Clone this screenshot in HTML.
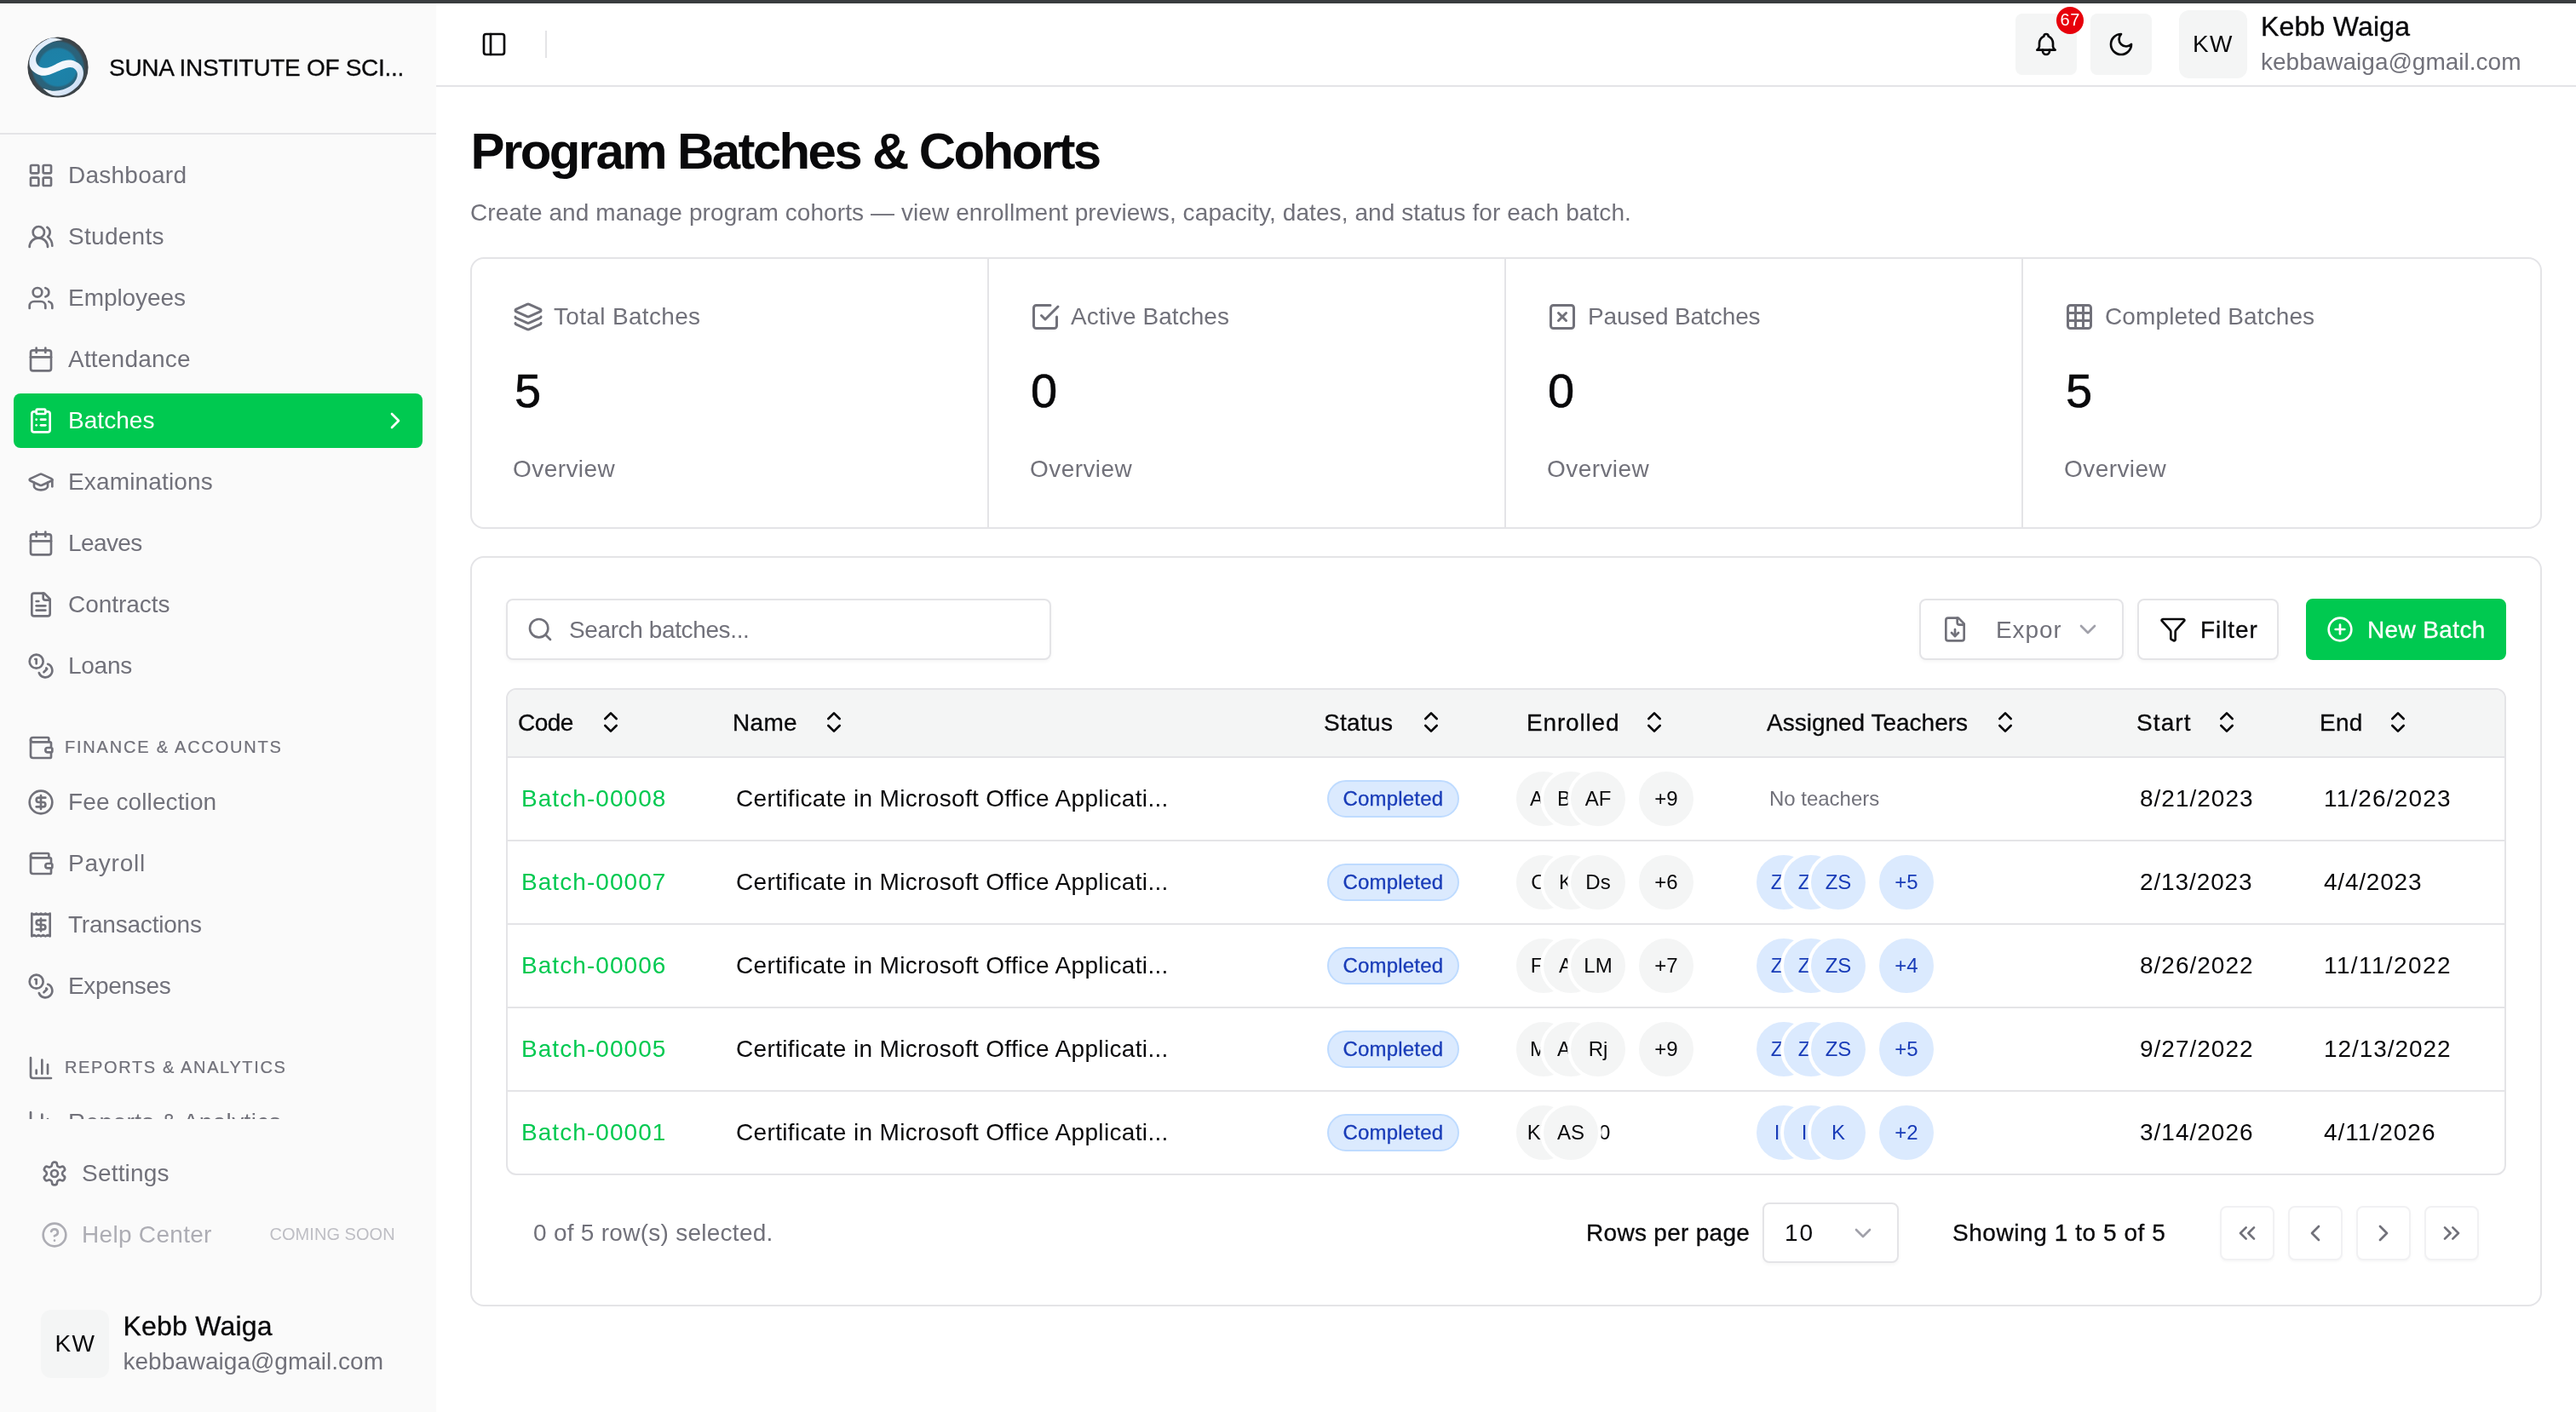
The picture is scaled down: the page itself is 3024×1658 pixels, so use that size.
<!DOCTYPE html>
<html lang="en"><head><meta charset="utf-8"><title>Program Batches &amp; Cohorts</title>
<style>
*{box-sizing:border-box;margin:0;padding:0}
html,body{width:3024px;height:1658px;overflow:hidden;background:#fff}
body{font-family:"Liberation Sans",sans-serif;position:relative;color:#09090b}
.topstrip{position:absolute;left:0;top:0;width:3024px;height:4px;background:#3a3d3f;z-index:10}
.sidebar{position:absolute;left:0;top:0;width:512px;height:1658px;background:#fafafa}
.scroll{position:absolute;left:0;top:158px;width:512px;height:1156px;overflow:hidden}
.scroll>*{margin-top:-158px}
.sidebar,.topbar,.main{will-change:transform}
.ic{position:absolute;display:block;overflow:visible}
.t{position:absolute;white-space:nowrap;font-weight:400}
h1.t{font-weight:700}
.hr{position:absolute;height:2px;background:#e4e4e7}
.vr{position:absolute;width:2px;background:#e4e4e7}
.active{position:absolute;background:#00c950;border-radius:8px;display:block}
.avatar{position:absolute;background:#f4f5f5}
.topbar{position:absolute;left:512px;top:4px;width:2512px;height:98px;border-bottom:2px solid #e4e4e7;background:#fff}
.ibtn{position:absolute;width:72px;height:72px;border-radius:8px;background:#f4f5f5}
.badge{position:absolute;width:32px;height:32px;border-radius:16px;background:#e7000b;color:#fff;font-size:20px;line-height:30px;text-align:center;letter-spacing:.6px;text-indent:.6px}
.main{position:absolute;left:0;top:0;width:3024px;height:1658px}
.card{position:absolute;border:2px solid #e4e4e7;border-radius:16px;background:#fff}
.input,.btn{position:absolute;border:2px solid #e4e4e7;border-radius:8px;background:#fff;box-shadow:0 2px 4px rgba(0,0,0,.04)}
.btn.green{background:#00c950;border-color:#00c950;box-shadow:none}
.table{position:absolute;border:2px solid #e4e4e7;border-radius:12px;overflow:hidden;background:#fff}
.thead{position:absolute;left:0;top:0;width:100%;height:79.5px;background:#f4f5f5;border-bottom:2px solid #e4e4e7}
.pill{position:absolute;height:44px;padding:0 16.5px;border-radius:22px;background:#dbeafe;border:2px solid #bedbff;color:#193cb8;font-size:24px;line-height:40px;font-weight:500;letter-spacing:.18px;-webkit-text-stroke:.3px}
.av{position:absolute;width:72px;height:72px;margin:-4px;border-radius:36px;border:4px solid #fff;font-size:24px;display:flex;align-items:center;justify-content:center}
.av.g{background:#f4f5f5;color:#09090b}
.av.b{background:#dbeafe;color:#193cb8}
.pbtn{position:absolute;width:64px;height:64px;border:2px solid #f1f1f3;border-radius:8px;background:#fff;box-shadow:0 2px 3px rgba(0,0,0,.03)}
</style></head><body>
<div class="topstrip"></div>
<aside class="sidebar">
<svg class="ic" style="left:32px;top:43px;width:72px;height:72px" viewBox="0 0 72 72">
<defs><radialGradient id="lg" cx="50%" cy="50%" r="50%"><stop offset="0" stop-color="#1c83aa"/><stop offset="0.6" stop-color="#1d80a6"/><stop offset="0.67" stop-color="#2a637b"/><stop offset="0.82" stop-color="#2b627a"/><stop offset="0.89" stop-color="#3b474d"/><stop offset="1" stop-color="#3d4145"/></radialGradient>
<linearGradient id="sw" x1="0" y1="0" x2="1" y2="1"><stop offset="0" stop-color="#cfe3fb"/><stop offset="0.45" stop-color="#f7f9fc"/><stop offset="0.6" stop-color="#f1f5fb"/><stop offset="1" stop-color="#bcd5f3"/></linearGradient></defs>
<circle cx="36" cy="36" r="35.6" fill="url(#lg)"/>
<path d="M41.8 3.9 C39.4 3.5 32.5 0.7 27.7 1.7 C22.9 2.7 16.7 6.5 12.8 9.9 C8.9 13.3 6.0 18.1 4.3 21.9 C2.6 25.7 2.1 29.4 2.5 32.5 C2.9 35.6 4.3 38.2 6.4 40.3 C8.5 42.4 12.1 44.5 14.9 45.3 C17.7 46.1 20.3 45.9 23.4 45.3 C26.5 44.7 30.2 42.9 33.3 41.7 C36.4 40.5 39.0 39.1 41.8 38.2 C44.6 37.3 47.9 36.1 50.3 36.1 C52.7 36.1 54.6 37.0 56.0 38.2 C57.4 39.4 58.6 41.2 58.8 43.2 C59.0 45.2 58.6 47.9 57.4 50.2 C56.2 52.6 54.3 55.3 51.7 57.3 C49.1 59.3 45.3 61.2 41.8 62.3 C38.3 63.4 34.4 63.9 30.5 63.7 C26.6 63.5 20.4 61.4 18.4 60.9 C19.9 62.1 24.5 66.5 27.7 67.9 C30.9 69.3 34.2 69.6 37.6 69.4 C41.0 69.2 44.7 68.3 48.2 66.5 C51.7 64.7 56.1 61.4 58.8 58.7 C61.5 56.0 63.3 53.0 64.5 50.2 C65.7 47.4 66.1 44.4 65.9 41.7 C65.7 39.0 64.8 36.0 63.1 33.9 C61.5 31.8 58.5 30.1 56.0 29.0 C53.5 27.9 51.0 27.5 48.2 27.6 C45.4 27.7 42.0 28.6 39.0 29.7 C36.0 30.8 33.3 32.8 30.5 34.0 C27.7 35.2 24.6 36.6 22.0 36.8 C19.4 37.0 16.8 36.5 14.9 35.4 C13.0 34.3 11.4 32.4 10.7 30.4 C10.0 28.4 9.8 25.9 10.7 23.3 C11.6 20.7 14.0 17.3 16.3 14.8 C18.7 12.3 22.0 10.1 24.8 8.5 C27.6 6.9 30.5 6.1 33.3 5.3 C36.1 4.5 40.4 4.1 41.8 3.9 Z" fill="url(#sw)"/>
</svg>
<div class="t" style="left:128px;top:59.5px;font-size:28px;line-height:39px;color:#09090b;font-weight:500;-webkit-text-stroke:0.31px;letter-spacing:-0.3px;">SUNA INSTITUTE OF SCI...</div>
<div class="hr" style="left:0;top:156px;width:512px"></div>
<nav class="scroll">
<svg class="ic" style="left:32px;top:190px;width:32px;height:32px;color:#71717a;" viewBox="0 0 24 24" fill="none" stroke="currentColor" stroke-width="2" stroke-linecap="round" stroke-linejoin="round"><rect width="7" height="7" x="3" y="3" rx="1"/><rect width="7" height="7" x="14" y="3" rx="1"/><rect width="7" height="7" x="14" y="14" rx="1"/><rect width="7" height="7" x="3" y="14" rx="1"/></svg>
<div class="t" style="left:80px;top:186px;font-size:28px;line-height:39px;color:#71717a;letter-spacing:0.25px;">Dashboard</div>
<svg class="ic" style="left:32px;top:262px;width:32px;height:32px;color:#71717a;" viewBox="0 0 24 24" fill="none" stroke="currentColor" stroke-width="2" stroke-linecap="round" stroke-linejoin="round"><path d="M18 21a8 8 0 0 0-16 0"/><circle cx="10" cy="8" r="5"/><path d="M22 20c0-3.37-2-6.500-4-8a5 5 0 0 0-.45-8.300"/></svg>
<div class="t" style="left:80px;top:258px;font-size:28px;line-height:39px;color:#71717a;letter-spacing:0.29px;">Students</div>
<svg class="ic" style="left:32px;top:334px;width:32px;height:32px;color:#71717a;" viewBox="0 0 24 24" fill="none" stroke="currentColor" stroke-width="2" stroke-linecap="round" stroke-linejoin="round"><path d="M16 21v-2a4 4 0 0 0-4-4H6a4 4 0 0 0-4 4v2"/><circle cx="9" cy="7" r="4"/><path d="M22 21v-2a4 4 0 0 0-3-3.870"/><path d="M16 3.130a4 4 0 0 1 0 7.750"/></svg>
<div class="t" style="left:80px;top:330px;font-size:28px;line-height:39px;color:#71717a;letter-spacing:-0.05px;">Employees</div>
<svg class="ic" style="left:32px;top:406px;width:32px;height:32px;color:#71717a;" viewBox="0 0 24 24" fill="none" stroke="currentColor" stroke-width="2" stroke-linecap="round" stroke-linejoin="round"><path d="M8 2v4"/><path d="M16 2v4"/><rect width="18" height="18" x="3" y="4" rx="2"/><path d="M3 10h18"/></svg>
<div class="t" style="left:80px;top:402px;font-size:28px;line-height:39px;color:#71717a;letter-spacing:0.2px;">Attendance</div>
<a class="active" style="left:16px;top:462px;width:480px;height:64px"></a>
<svg class="ic" style="left:32px;top:478px;width:32px;height:32px;color:#fff;" viewBox="0 0 24 24" fill="none" stroke="currentColor" stroke-width="2" stroke-linecap="round" stroke-linejoin="round"><rect width="8" height="4" x="8" y="2" rx="1" ry="1"/><path d="M16 4h2a2 2 0 0 1 2 2v14a2 2 0 0 1-2 2H6a2 2 0 0 1-2-2V6a2 2 0 0 1 2-2h2"/><path d="M12 11h4"/><path d="M12 16h4"/><path d="M8 11h.01"/><path d="M8 16h.01"/></svg>
<div class="t" style="left:80px;top:474px;font-size:28px;line-height:39px;color:#fff;letter-spacing:0.05px;">Batches</div>
<svg class="ic" style="left:448px;top:478px;width:32px;height:32px;color:#fff;" viewBox="0 0 24 24" fill="none" stroke="currentColor" stroke-width="2" stroke-linecap="round" stroke-linejoin="round"><path d="m9 18 6-6-6-6"/></svg>
<svg class="ic" style="left:32px;top:550px;width:32px;height:32px;color:#71717a;" viewBox="0 0 24 24" fill="none" stroke="currentColor" stroke-width="2" stroke-linecap="round" stroke-linejoin="round"><path d="M21.420 10.922a1 1 0 0 0-.019-1.838L12.830 5.180a2 2 0 0 0-1.660 0L2.600 9.080a1 1 0 0 0 0 1.832l8.570 3.908a2 2 0 0 0 1.660 0z"/><path d="M22 10v6"/><path d="M6 12.500V16a6 3 0 0 0 12 0v-3.500"/></svg>
<div class="t" style="left:80px;top:546px;font-size:28px;line-height:39px;color:#71717a;letter-spacing:0.15px;">Examinations</div>
<svg class="ic" style="left:32px;top:622px;width:32px;height:32px;color:#71717a;" viewBox="0 0 24 24" fill="none" stroke="currentColor" stroke-width="2" stroke-linecap="round" stroke-linejoin="round"><path d="M8 2v4"/><path d="M16 2v4"/><rect width="18" height="18" x="3" y="4" rx="2"/><path d="M3 10h18"/></svg>
<div class="t" style="left:80px;top:618px;font-size:28px;line-height:39px;color:#71717a;letter-spacing:-0.6px;">Leaves</div>
<svg class="ic" style="left:32px;top:694px;width:32px;height:32px;color:#71717a;" viewBox="0 0 24 24" fill="none" stroke="currentColor" stroke-width="2" stroke-linecap="round" stroke-linejoin="round"><path d="M15 2H6a2 2 0 0 0-2 2v16a2 2 0 0 0 2 2h12a2 2 0 0 0 2-2V7Z"/><path d="M14 2v4a2 2 0 0 0 2 2h4"/><path d="M10 9H8"/><path d="M16 13H8"/><path d="M16 17H8"/></svg>
<div class="t" style="left:80px;top:690px;font-size:28px;line-height:39px;color:#71717a;letter-spacing:-0.03px;">Contracts</div>
<svg class="ic" style="left:32px;top:766px;width:32px;height:32px;color:#71717a;" viewBox="0 0 24 24" fill="none" stroke="currentColor" stroke-width="2" stroke-linecap="round" stroke-linejoin="round"><circle cx="8" cy="8" r="6"/><path d="M18.090 10.370A6 6 0 1 1 10.340 18"/><path d="M7 6h1v4"/><path d="m16.710 13.880.7.710-2.820 2.820"/></svg>
<div class="t" style="left:80px;top:762px;font-size:28px;line-height:39px;color:#71717a;letter-spacing:-0.27px;">Loans</div>
<svg class="ic" style="left:32px;top:861.5px;width:32px;height:32px;color:#71717a;" viewBox="0 0 24 24" fill="none" stroke="currentColor" stroke-width="2" stroke-linecap="round" stroke-linejoin="round"><path d="M19 7V4a1 1 0 0 0-1-1H5a2 2 0 0 0 0 4h15a1 1 0 0 1 1 1v4h-3a2 2 0 0 0 0 4h3a1 1 0 0 0 1-1v-2a1 1 0 0 0-1-1"/><path d="M3 5v14a2 2 0 0 0 2 2h15a1 1 0 0 0 1-1v-4"/></svg>
<div class="t" style="left:76px;top:863px;font-size:20px;line-height:28px;color:#71717a;font-weight:500;-webkit-text-stroke:0.22px;letter-spacing:1.79px;">FINANCE &amp; ACCOUNTS</div>
<svg class="ic" style="left:32px;top:926px;width:32px;height:32px;color:#71717a;" viewBox="0 0 24 24" fill="none" stroke="currentColor" stroke-width="2" stroke-linecap="round" stroke-linejoin="round"><circle cx="12" cy="12" r="10"/><path d="M16 8h-6a2 2 0 1 0 0 4h4a2 2 0 1 1 0 4H8"/><path d="M12 18V6"/></svg>
<div class="t" style="left:80px;top:922px;font-size:28px;line-height:39px;color:#71717a;letter-spacing:0.11px;">Fee collection</div>
<svg class="ic" style="left:32px;top:998px;width:32px;height:32px;color:#71717a;" viewBox="0 0 24 24" fill="none" stroke="currentColor" stroke-width="2" stroke-linecap="round" stroke-linejoin="round"><path d="M19 7V4a1 1 0 0 0-1-1H5a2 2 0 0 0 0 4h15a1 1 0 0 1 1 1v4h-3a2 2 0 0 0 0 4h3a1 1 0 0 0 1-1v-2a1 1 0 0 0-1-1"/><path d="M3 5v14a2 2 0 0 0 2 2h15a1 1 0 0 0 1-1v-4"/></svg>
<div class="t" style="left:80px;top:994px;font-size:28px;line-height:39px;color:#71717a;letter-spacing:0.77px;">Payroll</div>
<svg class="ic" style="left:32px;top:1070px;width:32px;height:32px;color:#71717a;" viewBox="0 0 24 24" fill="none" stroke="currentColor" stroke-width="2" stroke-linecap="round" stroke-linejoin="round"><path d="M4 2v20l2-1 2 1 2-1 2 1 2-1 2 1 2-1 2 1V2l-2 1-2-1-2 1-2-1-2 1-2-1-2 1Z"/><path d="M16 8h-6a2 2 0 1 0 0 4h4a2 2 0 1 1 0 4H8"/><path d="M12 17.500v-11"/></svg>
<div class="t" style="left:80px;top:1066px;font-size:28px;line-height:39px;color:#71717a;letter-spacing:-0.21px;">Transactions</div>
<svg class="ic" style="left:32px;top:1142px;width:32px;height:32px;color:#71717a;" viewBox="0 0 24 24" fill="none" stroke="currentColor" stroke-width="2" stroke-linecap="round" stroke-linejoin="round"><circle cx="8" cy="8" r="6"/><path d="M18.090 10.370A6 6 0 1 1 10.340 18"/><path d="M7 6h1v4"/><path d="m16.710 13.880.7.710-2.820 2.820"/></svg>
<div class="t" style="left:80px;top:1138px;font-size:28px;line-height:39px;color:#71717a;letter-spacing:-0.31px;">Expenses</div>
<svg class="ic" style="left:32px;top:1238px;width:32px;height:32px;color:#71717a;" viewBox="0 0 24 24" fill="none" stroke="currentColor" stroke-width="2" stroke-linecap="round" stroke-linejoin="round"><path d="M3 3v16a2 2 0 0 0 2 2h16"/><path d="M18 17V9"/><path d="M13 17V5"/><path d="M8 17v-3"/></svg>
<div class="t" style="left:76px;top:1239px;font-size:20px;line-height:28px;color:#71717a;font-weight:500;-webkit-text-stroke:0.22px;letter-spacing:1.64px;">REPORTS &amp; ANALYTICS</div>
<svg class="ic" style="left:32px;top:1301.5px;width:32px;height:32px;color:#71717a;" viewBox="0 0 24 24" fill="none" stroke="currentColor" stroke-width="2" stroke-linecap="round" stroke-linejoin="round"><path d="M3 3v16a2 2 0 0 0 2 2h16"/><path d="M18 17V9"/><path d="M13 17V5"/><path d="M8 17v-3"/></svg>
<div class="t" style="left:80px;top:1297.5px;font-size:28px;line-height:39px;color:#71717a;letter-spacing:0.39px;">Reports &amp; Analytics</div>
</nav>
<svg class="ic" style="left:48px;top:1361.5px;width:32px;height:32px;color:#71717a;" viewBox="0 0 24 24" fill="none" stroke="currentColor" stroke-width="2" stroke-linecap="round" stroke-linejoin="round"><path d="M12.220 2h-.44a2 2 0 0 0-2 2v.18a2 2 0 0 1-1 1.730l-.43.25a2 2 0 0 1-2 0l-.15-.08a2 2 0 0 0-2.730.730l-.22.38a2 2 0 0 0 .73 2.730l.15.1a2 2 0 0 1 1 1.720v.51a2 2 0 0 1-1 1.740l-.15.09a2 2 0 0 0-.73 2.730l.22.38a2 2 0 0 0 2.730.730l.15-.08a2 2 0 0 1 2 0l.43.25a2 2 0 0 1 1 1.730V20a2 2 0 0 0 2 2h.44a2 2 0 0 0 2-2v-.18a2 2 0 0 1 1-1.730l.43-.25a2 2 0 0 1 2 0l.15.08a2 2 0 0 0 2.730-.73l.22-.39a2 2 0 0 0-.73-2.730l-.15-.08a2 2 0 0 1-1-1.740v-.5a2 2 0 0 1 1-1.740l.15-.09a2 2 0 0 0 .73-2.730l-.22-.38a2 2 0 0 0-2.730-.73l-.15.08a2 2 0 0 1-2 0l-.43-.25a2 2 0 0 1-1-1.730V4a2 2 0 0 0-2-2z"/><circle cx="12" cy="12" r="3"/></svg>
<div class="t" style="left:96px;top:1357.5px;font-size:28px;line-height:39px;color:#71717a;letter-spacing:0.2px;">Settings</div>
<svg class="ic" style="left:48px;top:1433.5px;width:32px;height:32px;color:#adadb4;" viewBox="0 0 24 24" fill="none" stroke="currentColor" stroke-width="2" stroke-linecap="round" stroke-linejoin="round"><circle cx="12" cy="12" r="10"/><path d="M9.090 9a3 3 0 0 1 5.830 1c0 2-3 3-3 3"/><path d="M12 17h.01"/></svg>
<div class="t" style="left:96px;top:1429.5px;font-size:28px;line-height:39px;color:#adadb4;letter-spacing:0.3px;">Help Center</div>
<div class="t" style="left:316.5px;top:1435px;font-size:20px;line-height:28px;color:#bebec4;letter-spacing:0.05px;">COMING SOON</div>
<div class="avatar" style="left:48px;top:1538px;width:80px;height:80px;border-radius:12px"></div>
<div class="t" style="left:64.5px;top:1558px;font-size:28px;line-height:39px;color:#09090b;letter-spacing:1.2px;">KW</div>
<div class="t" style="left:144.5px;top:1534.5px;font-size:32px;line-height:45px;color:#09090b;font-weight:500;-webkit-text-stroke:0.35px;letter-spacing:0.22px;">Kebb Waiga</div>
<div class="t" style="left:144.5px;top:1578.5px;font-size:28px;line-height:39px;color:#71717a;">kebbawaiga@gmail.com</div>
</aside>
<header class="topbar">
<svg class="ic" style="left:52px;top:32px;width:32px;height:32px;color:#09090b;" viewBox="0 0 24 24" fill="none" stroke="currentColor" stroke-width="2" stroke-linecap="round" stroke-linejoin="round"><rect width="18" height="18" x="3" y="3" rx="2"/><path d="M9 3v18"/></svg>
<div style="position:absolute;left:128px;top:32px;width:2px;height:32px;background:#e4e4e7"></div>
<div class="ibtn" style="left:1854px;top:12px"></div>
<svg class="ic" style="left:1874px;top:32px;width:32px;height:32px;color:#09090b;" viewBox="0 0 24 24" fill="none" stroke="currentColor" stroke-width="2" stroke-linecap="round" stroke-linejoin="round"><path d="M10 5a2 2 0 1 1 4 0a7 7 0 0 1 4 6v3a4 4 0 0 0 2 3h-16a4 4 0 0 0 2 -3v-3a7 7 0 0 1 4 -6"/><path d="M9 17v1a3 3 0 0 0 6 0v-1"/></svg>
<div class="badge" style="left:1902px;top:4px">67</div>
<div class="ibtn" style="left:1942px;top:12px"></div>
<svg class="ic" style="left:1962px;top:32px;width:32px;height:32px;color:#09090b;" viewBox="0 0 24 24" fill="none" stroke="currentColor" stroke-width="2" stroke-linecap="round" stroke-linejoin="round"><path d="M12 3a6 6 0 0 0 9 9 9 9 0 1 1-9-9Z"/></svg>
<div class="avatar" style="left:2046px;top:8px;width:80px;height:80px;border-radius:12px"></div>
<div class="t" style="left:2062px;top:28px;font-size:28px;line-height:39px;color:#09090b;letter-spacing:1.2px;">KW</div>
<div class="t" style="left:2142px;top:4.5px;font-size:32px;line-height:45px;color:#09090b;font-weight:500;-webkit-text-stroke:0.35px;letter-spacing:0.22px;">Kebb Waiga</div>
<div class="t" style="left:2142px;top:48.5px;font-size:28px;line-height:39px;color:#71717a;">kebbawaiga@gmail.com</div>
</header>
<main class="main">
<h1 class="t" style="left:552.5px;top:136px;font-size:60px;line-height:84px;color:#09090b;font-weight:700;letter-spacing:-2.62px;">Program Batches &amp; Cohorts</h1>
<p class="t" style="left:552px;top:229.8px;font-size:28px;line-height:39px;color:#71717a;letter-spacing:0.09px;">Create and manage program cohorts — view enrollment previews, capacity, dates, and status for each batch.</p>
<section class="card" style="left:552px;top:302px;width:2432px;height:319px">
<svg class="ic" style="left:48px;top:50px;width:36px;height:36px;color:#71717a;" viewBox="0 0 24 24" fill="none" stroke="currentColor" stroke-width="2" stroke-linecap="round" stroke-linejoin="round"><path d="M12.830 2.180a2 2 0 0 0-1.660 0L2.600 6.080a1 1 0 0 0 0 1.830l8.580 3.910a2 2 0 0 0 1.660 0l8.580-3.900a1 1 0 0 0 0-1.830z"/><path d="M2 12a1 1 0 0 0 .58.910l8.600 3.910a2 2 0 0 0 1.650 0l8.580-3.900A1 1 0 0 0 22 12"/><path d="M2 17a1 1 0 0 0 .58.910l8.600 3.910a2 2 0 0 0 1.650 0l8.580-3.900A1 1 0 0 0 22 17"/></svg>
<div class="t" style="left:96px;top:47.7px;font-size:28px;line-height:39px;color:#71717a;letter-spacing:0.33px;">Total Batches</div>
<div class="t" style="left:50px;top:116px;font-size:56px;line-height:78px;color:#09090b;font-weight:500;-webkit-text-stroke:0.62px;">5</div>
<div class="t" style="left:48px;top:227px;font-size:28px;line-height:39px;color:#71717a;letter-spacing:0.43px;">Overview</div>
<div class="vr" style="left:605px;top:0;height:315px"></div>
<svg class="ic" style="left:655px;top:50px;width:36px;height:36px;color:#71717a;" viewBox="0 0 24 24" fill="none" stroke="currentColor" stroke-width="2" stroke-linecap="round" stroke-linejoin="round"><path d="m9 11 3 3L22 4"/><path d="M21 12v7a2 2 0 0 1-2 2H5a2 2 0 0 1-2-2V5a2 2 0 0 1 2-2h11"/></svg>
<div class="t" style="left:703px;top:47.7px;font-size:28px;line-height:39px;color:#71717a;letter-spacing:0.06px;">Active Batches</div>
<div class="t" style="left:656px;top:116px;font-size:56px;line-height:78px;color:#09090b;font-weight:500;-webkit-text-stroke:0.62px;">0</div>
<div class="t" style="left:655px;top:227px;font-size:28px;line-height:39px;color:#71717a;letter-spacing:0.43px;">Overview</div>
<div class="vr" style="left:1212px;top:0;height:315px"></div>
<svg class="ic" style="left:1262px;top:50px;width:36px;height:36px;color:#71717a;" viewBox="0 0 24 24" fill="none" stroke="currentColor" stroke-width="2" stroke-linecap="round" stroke-linejoin="round"><rect width="18" height="18" x="3" y="3" rx="2" ry="2"/><path d="m15 9-6 6"/><path d="m9 9 6 6"/></svg>
<div class="t" style="left:1310px;top:47.7px;font-size:28px;line-height:39px;color:#71717a;letter-spacing:-0.1px;">Paused Batches</div>
<div class="t" style="left:1263px;top:116px;font-size:56px;line-height:78px;color:#09090b;font-weight:500;-webkit-text-stroke:0.62px;">0</div>
<div class="t" style="left:1262px;top:227px;font-size:28px;line-height:39px;color:#71717a;letter-spacing:0.43px;">Overview</div>
<div class="vr" style="left:1819px;top:0;height:315px"></div>
<svg class="ic" style="left:1869px;top:50px;width:36px;height:36px;color:#71717a;" viewBox="0 0 24 24" fill="none" stroke="currentColor" stroke-width="2" stroke-linecap="round" stroke-linejoin="round"><rect width="18" height="18" x="3" y="3" rx="2"/><path d="M3 9h18"/><path d="M3 15h18"/><path d="M9 3v18"/><path d="M15 3v18"/></svg>
<div class="t" style="left:1917px;top:47.7px;font-size:28px;line-height:39px;color:#71717a;letter-spacing:0.11px;">Completed Batches</div>
<div class="t" style="left:1871px;top:116px;font-size:56px;line-height:78px;color:#09090b;font-weight:500;-webkit-text-stroke:0.62px;">5</div>
<div class="t" style="left:1869px;top:227px;font-size:28px;line-height:39px;color:#71717a;letter-spacing:0.43px;">Overview</div>
</section>
<section class="card" style="left:552px;top:653px;width:2432px;height:881px">
<div class="input" style="left:40px;top:48px;width:640px;height:72px"></div>
<svg class="ic" style="left:64px;top:68px;width:32px;height:32px;color:#71717a;" viewBox="0 0 24 24" fill="none" stroke="currentColor" stroke-width="2" stroke-linecap="round" stroke-linejoin="round"><circle cx="11" cy="11" r="8"/><path d="m21 21-4.300-4.300"/></svg>
<div class="t" style="left:114px;top:64.5px;font-size:28px;line-height:39px;color:#71717a;letter-spacing:-0.38px;">Search batches...</div>
<div class="btn" style="left:1699px;top:48px;width:240px;height:72px"></div>
<svg class="ic" style="left:1725px;top:68px;width:32px;height:32px;color:#71717a;" viewBox="0 0 24 24" fill="none" stroke="currentColor" stroke-width="2" stroke-linecap="round" stroke-linejoin="round"><path d="M15 2H6a2 2 0 0 0-2 2v16a2 2 0 0 0 2 2h12a2 2 0 0 0 2-2V7Z"/><path d="M14 2v4a2 2 0 0 0 2 2h4"/><path d="M12 18v-6"/><path d="m9 15 3 3 3-3"/></svg>
<div class="t" style="left:1789px;top:64.5px;font-size:28px;line-height:39px;color:#71717a;letter-spacing:0.9px;width:76px;overflow:hidden;white-space:nowrap;">Export</div>
<svg class="ic" style="left:1881px;top:68px;width:32px;height:32px;color:#a1a1aa;" viewBox="0 0 24 24" fill="none" stroke="currentColor" stroke-width="2" stroke-linecap="round" stroke-linejoin="round"><path d="m6 9 6 6 6-6"/></svg>
<div class="btn" style="left:1954.5px;top:48px;width:166px;height:72px"></div>
<svg class="ic" style="left:1981px;top:68px;width:32px;height:32px;color:#09090b;" viewBox="0 0 24 24" fill="none" stroke="currentColor" stroke-width="2" stroke-linecap="round" stroke-linejoin="round"><path d="M10 20a1 1 0 0 0 .553.895l2 1A1 1 0 0 0 14 21v-7a2 2 0 0 1 .517-1.341L21.740 4.670A1 1 0 0 0 21 3H3a1 1 0 0 0-.742 1.670l7.225 7.989A2 2 0 0 1 10 14z"/></svg>
<div class="t" style="left:2029px;top:64.5px;font-size:28px;line-height:39px;color:#09090b;font-weight:500;-webkit-text-stroke:0.31px;letter-spacing:0.92px;">Filter</div>
<div class="btn green" style="left:2153px;top:48px;width:235px;height:72px"></div>
<svg class="ic" style="left:2177px;top:68px;width:32px;height:32px;color:#fff;" viewBox="0 0 24 24" fill="none" stroke="currentColor" stroke-width="2" stroke-linecap="round" stroke-linejoin="round"><circle cx="12" cy="12" r="10"/><path d="M8 12h8"/><path d="M12 8v8"/></svg>
<div class="t" style="left:2225px;top:64.5px;font-size:28px;line-height:39px;color:#fff;font-weight:500;-webkit-text-stroke:0.31px;letter-spacing:0.38px;">New Batch</div>
<div class="table" style="left:40px;top:153px;width:2348px;height:571.5px">
<div class="thead"></div>
<div class="t" style="left:12px;top:18.5px;font-size:28px;line-height:39px;color:#09090b;font-weight:500;-webkit-text-stroke:0.31px;letter-spacing:-0.53px;">Code</div>
<svg class="ic" style="left:105px;top:22px;width:32px;height:32px;color:#09090b;" viewBox="0 0 24 24" fill="none" stroke="currentColor" stroke-width="2" stroke-linecap="round" stroke-linejoin="round"><path d="m7 15 5 5 5-5"/><path d="m7 9 5-5 5 5"/></svg>
<div class="t" style="left:264px;top:18.5px;font-size:28px;line-height:39px;color:#09090b;font-weight:500;-webkit-text-stroke:0.31px;letter-spacing:0.3px;">Name</div>
<svg class="ic" style="left:367px;top:22px;width:32px;height:32px;color:#09090b;" viewBox="0 0 24 24" fill="none" stroke="currentColor" stroke-width="2" stroke-linecap="round" stroke-linejoin="round"><path d="m7 15 5 5 5-5"/><path d="m7 9 5-5 5 5"/></svg>
<div class="t" style="left:958px;top:18.5px;font-size:28px;line-height:39px;color:#09090b;font-weight:500;-webkit-text-stroke:0.31px;letter-spacing:0.32px;">Status</div>
<svg class="ic" style="left:1068px;top:22px;width:32px;height:32px;color:#09090b;" viewBox="0 0 24 24" fill="none" stroke="currentColor" stroke-width="2" stroke-linecap="round" stroke-linejoin="round"><path d="m7 15 5 5 5-5"/><path d="m7 9 5-5 5 5"/></svg>
<div class="t" style="left:1196px;top:18.5px;font-size:28px;line-height:39px;color:#09090b;font-weight:500;-webkit-text-stroke:0.31px;letter-spacing:0.83px;">Enrolled</div>
<svg class="ic" style="left:1330px;top:22px;width:32px;height:32px;color:#09090b;" viewBox="0 0 24 24" fill="none" stroke="currentColor" stroke-width="2" stroke-linecap="round" stroke-linejoin="round"><path d="m7 15 5 5 5-5"/><path d="m7 9 5-5 5 5"/></svg>
<div class="t" style="left:1478px;top:18.5px;font-size:28px;line-height:39px;color:#09090b;font-weight:500;-webkit-text-stroke:0.31px;">Assigned Teachers</div>
<svg class="ic" style="left:1742px;top:22px;width:32px;height:32px;color:#09090b;" viewBox="0 0 24 24" fill="none" stroke="currentColor" stroke-width="2" stroke-linecap="round" stroke-linejoin="round"><path d="m7 15 5 5 5-5"/><path d="m7 9 5-5 5 5"/></svg>
<div class="t" style="left:1912px;top:18.5px;font-size:28px;line-height:39px;color:#09090b;font-weight:500;-webkit-text-stroke:0.31px;letter-spacing:1.1px;">Start</div>
<svg class="ic" style="left:2002px;top:22px;width:32px;height:32px;color:#09090b;" viewBox="0 0 24 24" fill="none" stroke="currentColor" stroke-width="2" stroke-linecap="round" stroke-linejoin="round"><path d="m7 15 5 5 5-5"/><path d="m7 9 5-5 5 5"/></svg>
<div class="t" style="left:2127px;top:18.5px;font-size:28px;line-height:39px;color:#09090b;font-weight:500;-webkit-text-stroke:0.31px;letter-spacing:0.2px;">End</div>
<svg class="ic" style="left:2203px;top:22px;width:32px;height:32px;color:#09090b;" viewBox="0 0 24 24" fill="none" stroke="currentColor" stroke-width="2" stroke-linecap="round" stroke-linejoin="round"><path d="m7 15 5 5 5-5"/><path d="m7 9 5-5 5 5"/></svg>
<div class="t" style="left:16px;top:108px;font-size:28px;line-height:39px;color:#00c950;letter-spacing:1.06px;">Batch-00008</div>
<div class="t" style="left:268px;top:108px;font-size:28px;line-height:39px;color:#09090b;letter-spacing:0.34px;">Certificate in Microsoft Office Applicati...</div>
<div class="pill" style="left:962px;top:105.5px">Completed</div>
<div class="av g" style="left:1184px;top:95.5px">AB</div>
<div class="av g" style="left:1216px;top:95.5px">BK</div>
<div class="av g" style="left:1248px;top:95.5px">AF</div>
<div class="av g" style="left:1328px;top:95.5px">+9</div>
<div class="t" style="left:1481px;top:110.5px;font-size:24px;line-height:34px;color:#71717a;letter-spacing:-0.02px;">No teachers</div>
<div class="t" style="left:1916px;top:108px;font-size:28px;line-height:39px;color:#09090b;letter-spacing:1px;">8/21/2023</div>
<div class="t" style="left:2132px;top:108px;font-size:28px;line-height:39px;color:#09090b;letter-spacing:1.17px;">11/26/2023</div>
<div class="hr" style="left:0;top:175.5px;width:2344px"></div>
<div class="t" style="left:16px;top:206px;font-size:28px;line-height:39px;color:#00c950;letter-spacing:1.06px;">Batch-00007</div>
<div class="t" style="left:268px;top:206px;font-size:28px;line-height:39px;color:#09090b;letter-spacing:0.34px;">Certificate in Microsoft Office Applicati...</div>
<div class="pill" style="left:962px;top:203.5px">Completed</div>
<div class="av g" style="left:1184px;top:193.5px">CJ</div>
<div class="av g" style="left:1216px;top:193.5px">KJ</div>
<div class="av g" style="left:1248px;top:193.5px">Ds</div>
<div class="av g" style="left:1328px;top:193.5px">+6</div>
<div class="av b" style="left:1466px;top:193.5px">ZS</div>
<div class="av b" style="left:1498px;top:193.5px">ZS</div>
<div class="av b" style="left:1530px;top:193.5px">ZS</div>
<div class="av b" style="left:1610px;top:193.5px">+5</div>
<div class="t" style="left:1916px;top:206px;font-size:28px;line-height:39px;color:#09090b;letter-spacing:0.88px;">2/13/2023</div>
<div class="t" style="left:2132px;top:206px;font-size:28px;line-height:39px;color:#09090b;letter-spacing:0.79px;">4/4/2023</div>
<div class="hr" style="left:0;top:273.5px;width:2344px"></div>
<div class="t" style="left:16px;top:304px;font-size:28px;line-height:39px;color:#00c950;letter-spacing:1.06px;">Batch-00006</div>
<div class="t" style="left:268px;top:304px;font-size:28px;line-height:39px;color:#09090b;letter-spacing:0.34px;">Certificate in Microsoft Office Applicati...</div>
<div class="pill" style="left:962px;top:301.5px">Completed</div>
<div class="av g" style="left:1184px;top:291.5px">FS</div>
<div class="av g" style="left:1216px;top:291.5px">AJ</div>
<div class="av g" style="left:1248px;top:291.5px">LM</div>
<div class="av g" style="left:1328px;top:291.5px">+7</div>
<div class="av b" style="left:1466px;top:291.5px">ZS</div>
<div class="av b" style="left:1498px;top:291.5px">ZS</div>
<div class="av b" style="left:1530px;top:291.5px">ZS</div>
<div class="av b" style="left:1610px;top:291.5px">+4</div>
<div class="t" style="left:1916px;top:304px;font-size:28px;line-height:39px;color:#09090b;letter-spacing:1px;">8/26/2022</div>
<div class="t" style="left:2132px;top:304px;font-size:28px;line-height:39px;color:#09090b;letter-spacing:1.39px;">11/11/2022</div>
<div class="hr" style="left:0;top:371.5px;width:2344px"></div>
<div class="t" style="left:16px;top:402px;font-size:28px;line-height:39px;color:#00c950;letter-spacing:1.06px;">Batch-00005</div>
<div class="t" style="left:268px;top:402px;font-size:28px;line-height:39px;color:#09090b;letter-spacing:0.34px;">Certificate in Microsoft Office Applicati...</div>
<div class="pill" style="left:962px;top:399.5px">Completed</div>
<div class="av g" style="left:1184px;top:389.5px">MJ</div>
<div class="av g" style="left:1216px;top:389.5px">AB</div>
<div class="av g" style="left:1248px;top:389.5px">Rj</div>
<div class="av g" style="left:1328px;top:389.5px">+9</div>
<div class="av b" style="left:1466px;top:389.5px">ZS</div>
<div class="av b" style="left:1498px;top:389.5px">ZS</div>
<div class="av b" style="left:1530px;top:389.5px">ZS</div>
<div class="av b" style="left:1610px;top:389.5px">+5</div>
<div class="t" style="left:1916px;top:402px;font-size:28px;line-height:39px;color:#09090b;letter-spacing:1px;">9/27/2022</div>
<div class="t" style="left:2132px;top:402px;font-size:28px;line-height:39px;color:#09090b;letter-spacing:0.94px;">12/13/2022</div>
<div class="hr" style="left:0;top:469.5px;width:2344px"></div>
<div class="t" style="left:16px;top:500px;font-size:28px;line-height:39px;color:#00c950;letter-spacing:1.06px;">Batch-00001</div>
<div class="t" style="left:268px;top:500px;font-size:28px;line-height:39px;color:#09090b;letter-spacing:0.34px;">Certificate in Microsoft Office Applicati...</div>
<div class="pill" style="left:962px;top:497.5px">Completed</div>
<div class="t" style="left:1281px;top:502.5px;font-size:24px;line-height:34px;color:#09090b;">0</div>
<div class="av g" style="left:1184px;top:487.5px">KW</div>
<div class="av g" style="left:1216px;top:487.5px">AS</div>
<div class="av b" style="left:1466px;top:487.5px">IK</div>
<div class="av b" style="left:1498px;top:487.5px">IK</div>
<div class="av b" style="left:1530px;top:487.5px">K</div>
<div class="av b" style="left:1610px;top:487.5px">+2</div>
<div class="t" style="left:1916px;top:500px;font-size:28px;line-height:39px;color:#09090b;letter-spacing:1px;">3/14/2026</div>
<div class="t" style="left:2132px;top:500px;font-size:28px;line-height:39px;color:#09090b;letter-spacing:1px;">4/11/2026</div>
</div>
<div class="t" style="left:72px;top:773px;font-size:28px;line-height:39px;color:#71717a;letter-spacing:0.27px;">0 of 5 row(s) selected.</div>
<div class="t" style="left:1308px;top:773px;font-size:28px;line-height:39px;color:#09090b;font-weight:500;-webkit-text-stroke:0.31px;letter-spacing:0.3px;">Rows per page</div>
<div class="btn" style="left:1515px;top:757px;width:160px;height:71px"></div>
<div class="t" style="left:1541px;top:773px;font-size:28px;line-height:39px;color:#09090b;letter-spacing:2px;">10</div>
<svg class="ic" style="left:1616.5px;top:776.5px;width:32px;height:32px;color:#a1a1aa;" viewBox="0 0 24 24" fill="none" stroke="currentColor" stroke-width="2" stroke-linecap="round" stroke-linejoin="round"><path d="m6 9 6 6 6-6"/></svg>
<div class="t" style="left:1738px;top:773px;font-size:28px;line-height:39px;color:#09090b;font-weight:500;-webkit-text-stroke:0.31px;letter-spacing:0.56px;">Showing 1 to 5 of 5</div>
<div class="pbtn" style="left:2052px;top:760.5px"></div>
<svg class="ic" style="left:2068px;top:776.5px;width:32px;height:32px;color:#71717a;" viewBox="0 0 24 24" fill="none" stroke="currentColor" stroke-width="2" stroke-linecap="round" stroke-linejoin="round"><path d="m11 17-5-5 5-5"/><path d="m18 17-5-5 5-5"/></svg>
<div class="pbtn" style="left:2132px;top:760.5px"></div>
<svg class="ic" style="left:2148px;top:776.5px;width:32px;height:32px;color:#71717a;" viewBox="0 0 24 24" fill="none" stroke="currentColor" stroke-width="2" stroke-linecap="round" stroke-linejoin="round"><path d="m15 18-6-6 6-6"/></svg>
<div class="pbtn" style="left:2212px;top:760.5px"></div>
<svg class="ic" style="left:2228px;top:776.5px;width:32px;height:32px;color:#71717a;" viewBox="0 0 24 24" fill="none" stroke="currentColor" stroke-width="2" stroke-linecap="round" stroke-linejoin="round"><path d="m9 18 6-6-6-6"/></svg>
<div class="pbtn" style="left:2292px;top:760.5px"></div>
<svg class="ic" style="left:2308px;top:776.5px;width:32px;height:32px;color:#71717a;" viewBox="0 0 24 24" fill="none" stroke="currentColor" stroke-width="2" stroke-linecap="round" stroke-linejoin="round"><path d="m6 17 5-5-5-5"/><path d="m13 17 5-5-5-5"/></svg>
</section>
</main>
</body></html>
